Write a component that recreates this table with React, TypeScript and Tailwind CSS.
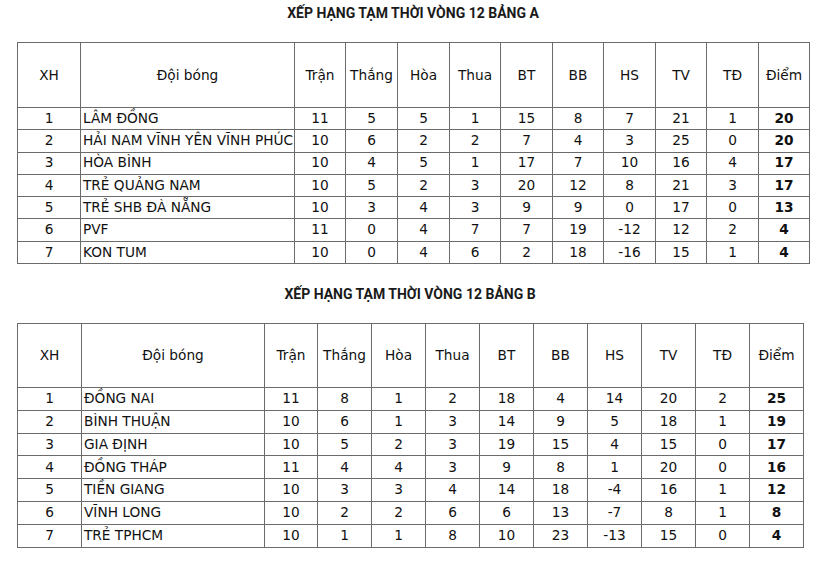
const headers = ['XH', 'Đội bóng', 'Trận', 'Thắng', 'Hòa', 'Thua', 'BT', 'BB', 'HS', 'TV', 'TĐ', 'Điểm'];

type Row = [string, string, ...number[]];

const groupA: Row[] = [
  ['1', 'LÂM ĐỒNG', 11, 5, 5, 1, 15, 8, 7, 21, 1, 20],
  ['2', 'HẢI NAM VĨNH YÊN VĨNH PHÚC', 10, 6, 2, 2, 7, 4, 3, 25, 0, 20],
  ['3', 'HÒA BÌNH', 10, 4, 5, 1, 17, 7, 10, 16, 4, 17],
  ['4', 'TRẺ QUẢNG NAM', 10, 5, 2, 3, 20, 12, 8, 21, 3, 17],
  ['5', 'TRẺ SHB ĐÀ NẴNG', 10, 3, 4, 3, 9, 9, 0, 17, 0, 13],
  ['6', 'PVF', 11, 0, 4, 7, 7, 19, -12, 12, 2, 4],
  ['7', 'KON TUM', 10, 0, 4, 6, 2, 18, -16, 15, 1, 4],
];

const groupB: Row[] = [
  ['1', 'ĐỒNG NAI', 11, 8, 1, 2, 18, 4, 14, 20, 2, 25],
  ['2', 'BÌNH THUẬN', 10, 6, 1, 3, 14, 9, 5, 18, 1, 19],
  ['3', 'GIA ĐỊNH', 10, 5, 2, 3, 19, 15, 4, 15, 0, 17],
  ['4', 'ĐỒNG THÁP', 11, 4, 4, 3, 9, 8, 1, 20, 0, 16],
  ['5', 'TIỀN GIANG', 10, 3, 3, 4, 14, 18, -4, 16, 1, 12],
  ['6', 'VĨNH LONG', 10, 2, 2, 6, 6, 13, -7, 8, 1, 8],
  ['7', 'TRẺ TPHCM', 10, 1, 1, 8, 10, 23, -13, 15, 0, 4],
];

function Standings({
  title,
  rows,
  widths,
  headH,
  rowH,
}: {
  title: string;
  rows: Row[];
  widths: number[];
  headH: string;
  rowH: string;
}) {
  const total = widths.reduce((a, b) => a + b, 0);
  return (
    <div style={{ width: total }}>
      <h2 className="text-center font-bold text-[14px] text-[#1a1a1a] leading-[26px] font-['Roboto',sans-serif]">
        {title}
      </h2>
      <table
        className="mt-[16px] w-full table-fixed border-collapse text-[13.7px] text-[#111] font-['DejaVu_Sans',Verdana,sans-serif]"
      >
        <colgroup>
          {widths.map((w, i) => (
            <col key={i} style={{ width: w }} />
          ))}
        </colgroup>
        <thead>
          <tr className={headH}>
            {headers.map((h) => (
              <th key={h} className="border border-[#6b6b6b] font-normal text-center p-0">
                {h}
              </th>
            ))}
          </tr>
        </thead>
        <tbody>
          {rows.map((r) => (
            <tr key={r[0]} className={rowH}>
              {r.map((c, i) => (
                <td
                  key={i}
                  className={
                    'border border-[#6b6b6b] p-0 leading-none ' +
                    (i === 1 ? 'text-left pl-[2px] whitespace-nowrap' : 'text-center') +
                    (i === 11 ? ' font-bold' : '')
                  }
                >
                  {c}
                </td>
              ))}
            </tr>
          ))}
        </tbody>
      </table>
    </div>
  );
}

export default function App() {
  return (
    <div className="w-[833px] h-[561px] bg-white overflow-hidden">
      <div className="pl-[17px]">
        <Standings
          title="XẾP HẠNG TẠM THỜI VÒNG 12 BẢNG A"
          rows={groupA}
          widths={[63, 214, 51, 52, 52, 51, 52, 51, 52, 51, 52, 51]}
          headH="h-[65px]"
          rowH="h-[22.3px]"
        />
        <div className="mt-[17px]">
          <Standings
            title="XẾP HẠNG TẠM THỜI VÒNG 12 BẢNG B"
            rows={groupB}
            widths={[64, 183, 53, 54, 54, 54, 54, 54, 54, 54, 54, 54]}
            headH="h-[64px]"
            rowH="h-[22.8px]"
          />
        </div>
      </div>
    </div>
  );
}
